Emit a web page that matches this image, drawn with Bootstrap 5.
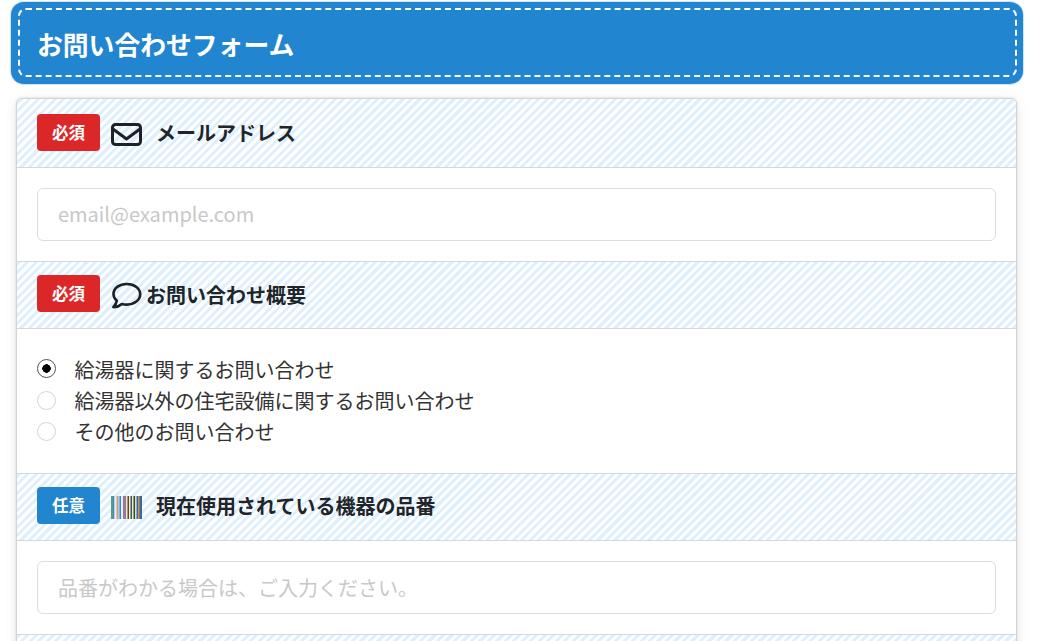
<!DOCTYPE html>
<html lang="ja">
<head>
<meta charset="utf-8">
<title>お問い合わせフォーム</title>
<link href="https://cdn.jsdelivr.net/npm/bootstrap@5.3.0/dist/css/bootstrap.min.css" rel="stylesheet">
<style>
html,body{height:641px;overflow:hidden;background:#fff}
body{font-family:"Noto Sans CJK JP","Noto Sans",sans-serif;color:#212529;padding:2px 16px 0 11px;font-size:20px}
.form-title{background:#2285d0;border-radius:13px;padding:6px 6px 7px 7px;box-shadow:0 0 0 1px #cfe4f6;width:1012px;height:82px}
.form-title-in{border:2px dashed #fff;border-radius:8px;height:69px;display:flex;align-items:center;padding:2px 0 0 17px;color:#fff;font-weight:700;font-size:25.8px;line-height:1}
.form-box{margin:14px 0 0 5px;width:1001px;border:1px solid #d4d4d4;border-radius:6px;box-shadow:0 0 3px rgba(0,0,0,.12),0 2px 14px rgba(0,0,0,.08);background:#fff}
.sec-head{padding:13px 0 16px 20px;display:flex;align-items:center;border-bottom:1px solid #d4d8dc;border-top:1px solid #d4d8dc;background:repeating-linear-gradient(-45deg,#deeffe 0 3px,#fff 3px 6px);font-weight:700;font-size:20px;color:#212529}
.sec-head.first{border-top:0;padding-top:15px;border-radius:5px 5px 0 0}
.sec-head.tail{height:68px}
.tag{width:63px;height:37px;border-radius:4px;color:#fff;font-size:16.5px;font-weight:700;display:flex;align-items:center;justify-content:center;flex:none;line-height:1}
.tag-req{background:#dc2729}
.tag-opt{background:#2285d0}
.ico{margin:4px 14px 0 11px;flex:none;display:block}
.ico-talk{margin-right:4px}
.talk-text{margin-top:2px}
.sec-body{padding:20px}
.fld{height:53px;border:1px solid #ddd;border-radius:6px;font-size:20px;padding:0 20px;box-shadow:none;color:#212529}
.fld-mail{padding-bottom:2px}
.fld::placeholder{color:#c8c8c8}
.opt{height:31.5px;display:flex;align-items:center;margin:0;padding:0;color:#333;font-size:20px;line-height:1}
.opt-text{padding-top:2px}
.opt .form-check-input{width:19px;height:19px;margin:0 18.5px 0 0;border:1px solid #d4d4d4;flex:none;float:none}
.opt .form-check-input:checked{background-color:#fff;border-color:#555;background-image:radial-gradient(circle,#000 0 4px,transparent 4.5px)}
.opts{padding:24px 20px 25.5px}
</style>
</head>
<body>
<div class="form-title"><div class="form-title-in">お問い合わせフォーム</div></div>
<form class="form-box">
  <div class="sec-head first"><span class="tag tag-req">必須</span>
    <svg class="ico" width="31" height="23" viewBox="0 0 31 23" fill="none" stroke="#1c2228" stroke-width="3" stroke-linejoin="round" stroke-linecap="round"><rect x="1.500" y="1.500" width="28" height="20" rx="3"/><path d="M2 6l13.500 10L29 6"/></svg>
    <span>メールアドレス</span></div>
  <div class="sec-body"><input type="email" class="form-control fld fld-mail" placeholder="email@example.com"></div>
  <div class="sec-head"><span class="tag tag-req">必須</span>
    <svg class="ico ico-talk" width="31" height="27" viewBox="0 0 31 27" fill="none" stroke="#1c2228" stroke-width="2.6" stroke-linejoin="round"><path d="M15.800 2C8 2 2.500 6.300 2.500 12c0 2.700 1.200 5 3.300 6.800C5.500 21 4 23.500 2.300 25.200c3 0 6.500-1.500 8.500-3.200 1.500.4 3.200.6 5 .6 7.700 0 13.400-4.600 13.400-10.300S23.500 2 15.800 2z"/></svg>
    <span class="talk-text">お問い合わせ概要</span></div>
  <div class="sec-body opts">
    <label class="form-check opt"><input class="form-check-input" type="radio" name="t" checked><span class="opt-text">給湯器に関するお問い合わせ</span></label>
    <label class="form-check opt"><input class="form-check-input" type="radio" name="t"><span class="opt-text">給湯器以外の住宅設備に関するお問い合わせ</span></label>
    <label class="form-check opt"><input class="form-check-input" type="radio" name="t"><span>その他のお問い合わせ</span></label>
  </div>
  <div class="sec-head"><span class="tag tag-opt">任意</span>
    <svg class="ico" width="31" height="23" viewBox="0 0 31 23"><rect x="0" width="2" height="23" fill="#5f9a7a"/><rect x="2" width="1.500" height="23" fill="#3f86d0"/><rect x="3.500" width="2" height="23" fill="#e4ecf2"/><rect x="5.500" width="1.500" height="23" fill="#d0a078"/><rect x="7" width="1.500" height="23" fill="#a9c8ec"/><rect x="8.500" width="1.500" height="23" fill="#3f86d0"/><rect x="10" width="2" height="23" fill="#ececec"/><rect x="12" width="3" height="23" fill="#8f7f98"/><rect x="15" width="1.500" height="23" fill="#ece4d0"/><rect x="16.500" width="1.500" height="23" fill="#7a3f2a"/><rect x="18" width="1.500" height="23" fill="#eef0b0"/><rect x="19.500" width="1.500" height="23" fill="#2f5a80"/><rect x="21" width="1.500" height="23" fill="#eef0b0"/><rect x="22.500" width="1.500" height="23" fill="#39424a"/><rect x="24" width="1.500" height="23" fill="#dce8a0"/><rect x="25.500" width="2" height="23" fill="#3f6ab0"/><rect x="27.500" width="1.500" height="23" fill="#b07a30"/><rect x="29" width="2" height="23" fill="#3568b0"/></svg>
    <span>現在使用されている機器の品番</span></div>
  <div class="sec-body"><input type="text" class="form-control fld" placeholder="品番がわかる場合は、ご入力ください。"></div>
  <div class="sec-head tail"></div>
</form>
<script src="https://cdn.jsdelivr.net/npm/bootstrap@5.3.0/dist/js/bootstrap.bundle.min.js"></script>
</body>
</html>
